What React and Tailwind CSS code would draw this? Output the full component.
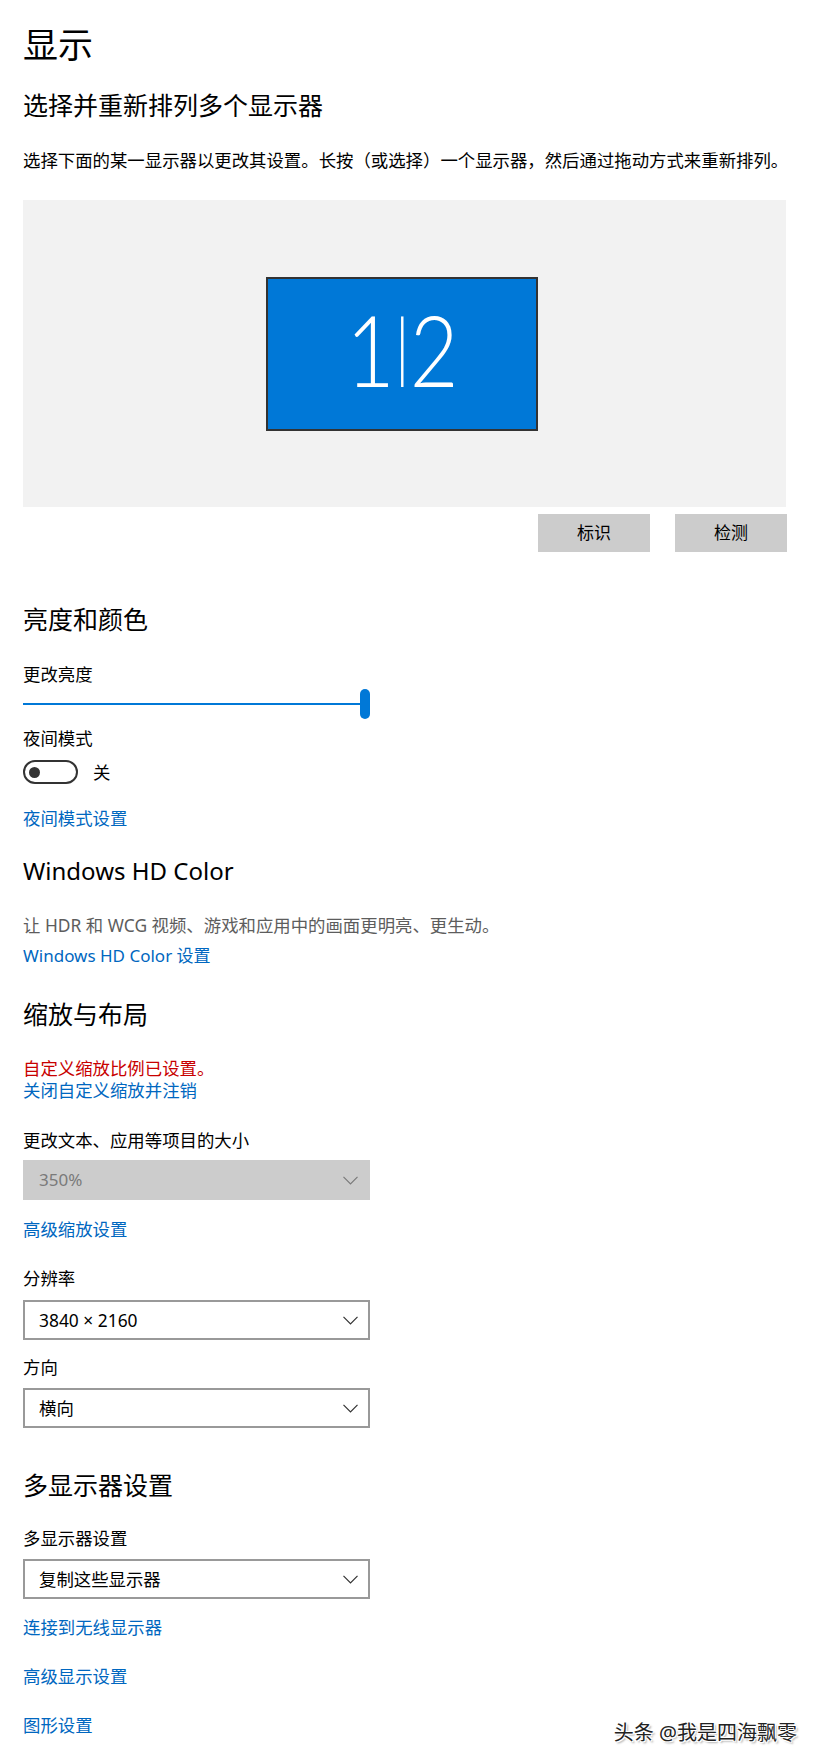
import React from 'react';

const FONT = { fontFamily: '"Noto Sans", "Noto Sans CJK SC", sans-serif' };

function Chevron({ c = '#333' }) {
  return (
    <svg width="15" height="9" viewBox="0 0 15 9" className="shrink-0">
      <polyline points="0.5,0.8 7.5,7.8 14.5,0.8" fill="none" stroke={c} strokeWidth="1.2" />
    </svg>
  );
}

function Select({ value, disabled, className = '' }) {
  if (disabled) {
    return (
      <div className={`w-[347px] h-[40px] bg-[#cccccc] flex items-center justify-between pl-[16px] pr-[12px] ${className}`}>
        <span className="text-[17px] text-[#7a7a7a]">{value}</span>
        <Chevron c="#7a7a7a" />
      </div>
    );
  }
  return (
    <div className={`w-[347px] h-[40px] border-2 border-[#999999] bg-white flex items-center justify-between pl-[14px] pr-[10px] ${className}`}>
      <span className="text-[17.4px] text-black">{value}</span>
      <Chevron />
    </div>
  );
}

const Label = ({ children, className = '' }) => (
  <div className={`text-[17.4px] leading-[24px] text-black ${className}`}>{children}</div>
);
const Link = ({ children, className = '' }) => (
  <div className={`text-[17.4px] leading-[24px] text-[#0067c0] ${className}`}>{children}</div>
);
const H2 = ({ children, className = '' }) => (
  <div className={`text-[25px] leading-[36px] text-black ${className}`}>{children}</div>
);

// "1|2" badge in a light face, squeezed a bit to match the narrow Segoe digits
function MonitorLabel() {
  const f = { fontFamily: 'Lato, "Noto Sans", sans-serif' };
  return (
    <div className="flex items-baseline text-white font-light leading-[100px] scale-x-[0.85]" style={f}>
      <span className="text-[99px]">1</span>
      <span className="text-[74px] relative top-[-13px]">|</span>
      <span className="text-[99px]">2</span>
    </div>
  );
}

export default function App() {
  return (
    <div className="relative w-[816px] h-[1762px] bg-white overflow-hidden pl-[23px] pt-[21px]" style={FONT}>
      <div className="text-[35px] leading-[48px] text-black">显示</div>
      <H2 className="mt-[18px]">选择并重新排列多个显示器</H2>
      <Label className="mt-[25px]">选择下面的某一显示器以更改其设置。长按（或选择）一个显示器，然后通过拖动方式来重新排列。</Label>

      {/* monitor arrangement */}
      <div className="mt-[28px] w-[763px] h-[307px] bg-[#f2f2f2] flex items-center justify-center">
        <div className="w-[272px] h-[154px] bg-[#0078d7] border-2 border-[#333333] flex items-center justify-center ml-[-5px]">
          <MonitorLabel />
        </div>
      </div>
      <div className="mt-[7px] w-[764px] flex justify-end gap-[25px]">
        <div className="w-[112px] h-[38px] bg-[#cccccc] flex items-center justify-center text-[17px] text-black">标识</div>
        <div className="w-[112px] h-[38px] bg-[#cccccc] flex items-center justify-center text-[17px] text-black">检测</div>
      </div>

      {/* brightness */}
      <H2 className="mt-[49px]">亮度和颜色</H2>
      <Label className="mt-[25px]">更改亮度</Label>
      <div className="mt-[3px] w-[347px] h-[30px] flex items-center">
        <div className="flex-1 h-[2px] bg-[#0078d7]" />
        <div className="w-[10px] h-[30px] rounded-full bg-[#0078d7]" />
      </div>
      <Label className="mt-[7px]">夜间模式</Label>
      <div className="mt-[10px] h-[24px] flex items-center gap-[15px]">
        <div className="w-[55px] h-[24px] rounded-full border-2 border-[#333333] flex items-center pl-[4px]">
          <div className="w-[11px] h-[11px] rounded-full bg-[#333333]" />
        </div>
        <span className="text-[17.4px] leading-[24px] text-black">关</span>
      </div>
      <Link className="mt-[22px]">夜间模式设置</Link>

      {/* HDR */}
      <div className="mt-[23px] text-[24px] leading-[36px] text-black">Windows HD Color</div>
      <div className="mt-[24px] text-[17.4px] leading-[24px] text-[#5d5d5d]">让 HDR 和 WCG 视频、游戏和应用中的画面更明亮、更生动。</div>
      <div className="mt-[7px] text-[17px] leading-[24px] text-[#0067c0]">Windows HD Color 设置</div>

      {/* scale */}
      <H2 className="mt-[28px]">缩放与布局</H2>
      <div className="mt-[25px] text-[17.4px] leading-[22px] text-[#c80000]">自定义缩放比例已设置。</div>
      <div className="text-[17.4px] leading-[22px] text-[#0067c0]">关闭自定义缩放并注销</div>
      <Label className="mt-[27px]">更改文本、应用等项目的大小</Label>
      <Select className="mt-[8px]" value="350%" disabled />
      <Link className="mt-[17px]">高级缩放设置</Link>
      <Label className="mt-[25px]">分辨率</Label>
      <Select className="mt-[10px]" value="3840 × 2160" />
      <Label className="mt-[15px]">方向</Label>
      <Select className="mt-[9px]" value="横向" />

      {/* multiple displays */}
      <H2 className="mt-[39px]">多显示器设置</H2>
      <Label className="mt-[23px]">多显示器设置</Label>
      <Select className="mt-[9px]" value="复制这些显示器" />
      <Link className="mt-[16px]">连接到无线显示器</Link>
      <Link className="mt-[25px]">高级显示设置</Link>
      <Link className="mt-[25px]">图形设置</Link>

      {/* watermark */}
      <div
        className="absolute right-[19px] top-[1719px] text-[20px] leading-[28px] text-[#222222]"
        style={{ textShadow: '1px 1px 0 #fff, -1px -1px 0 #fff, 1px -1px 0 #fff, -1px 1px 0 #fff, 2px 2px 2px rgba(0,0,0,0.35)' }}
      >
        头条 @我是四海飘零
      </div>
    </div>
  );
}
